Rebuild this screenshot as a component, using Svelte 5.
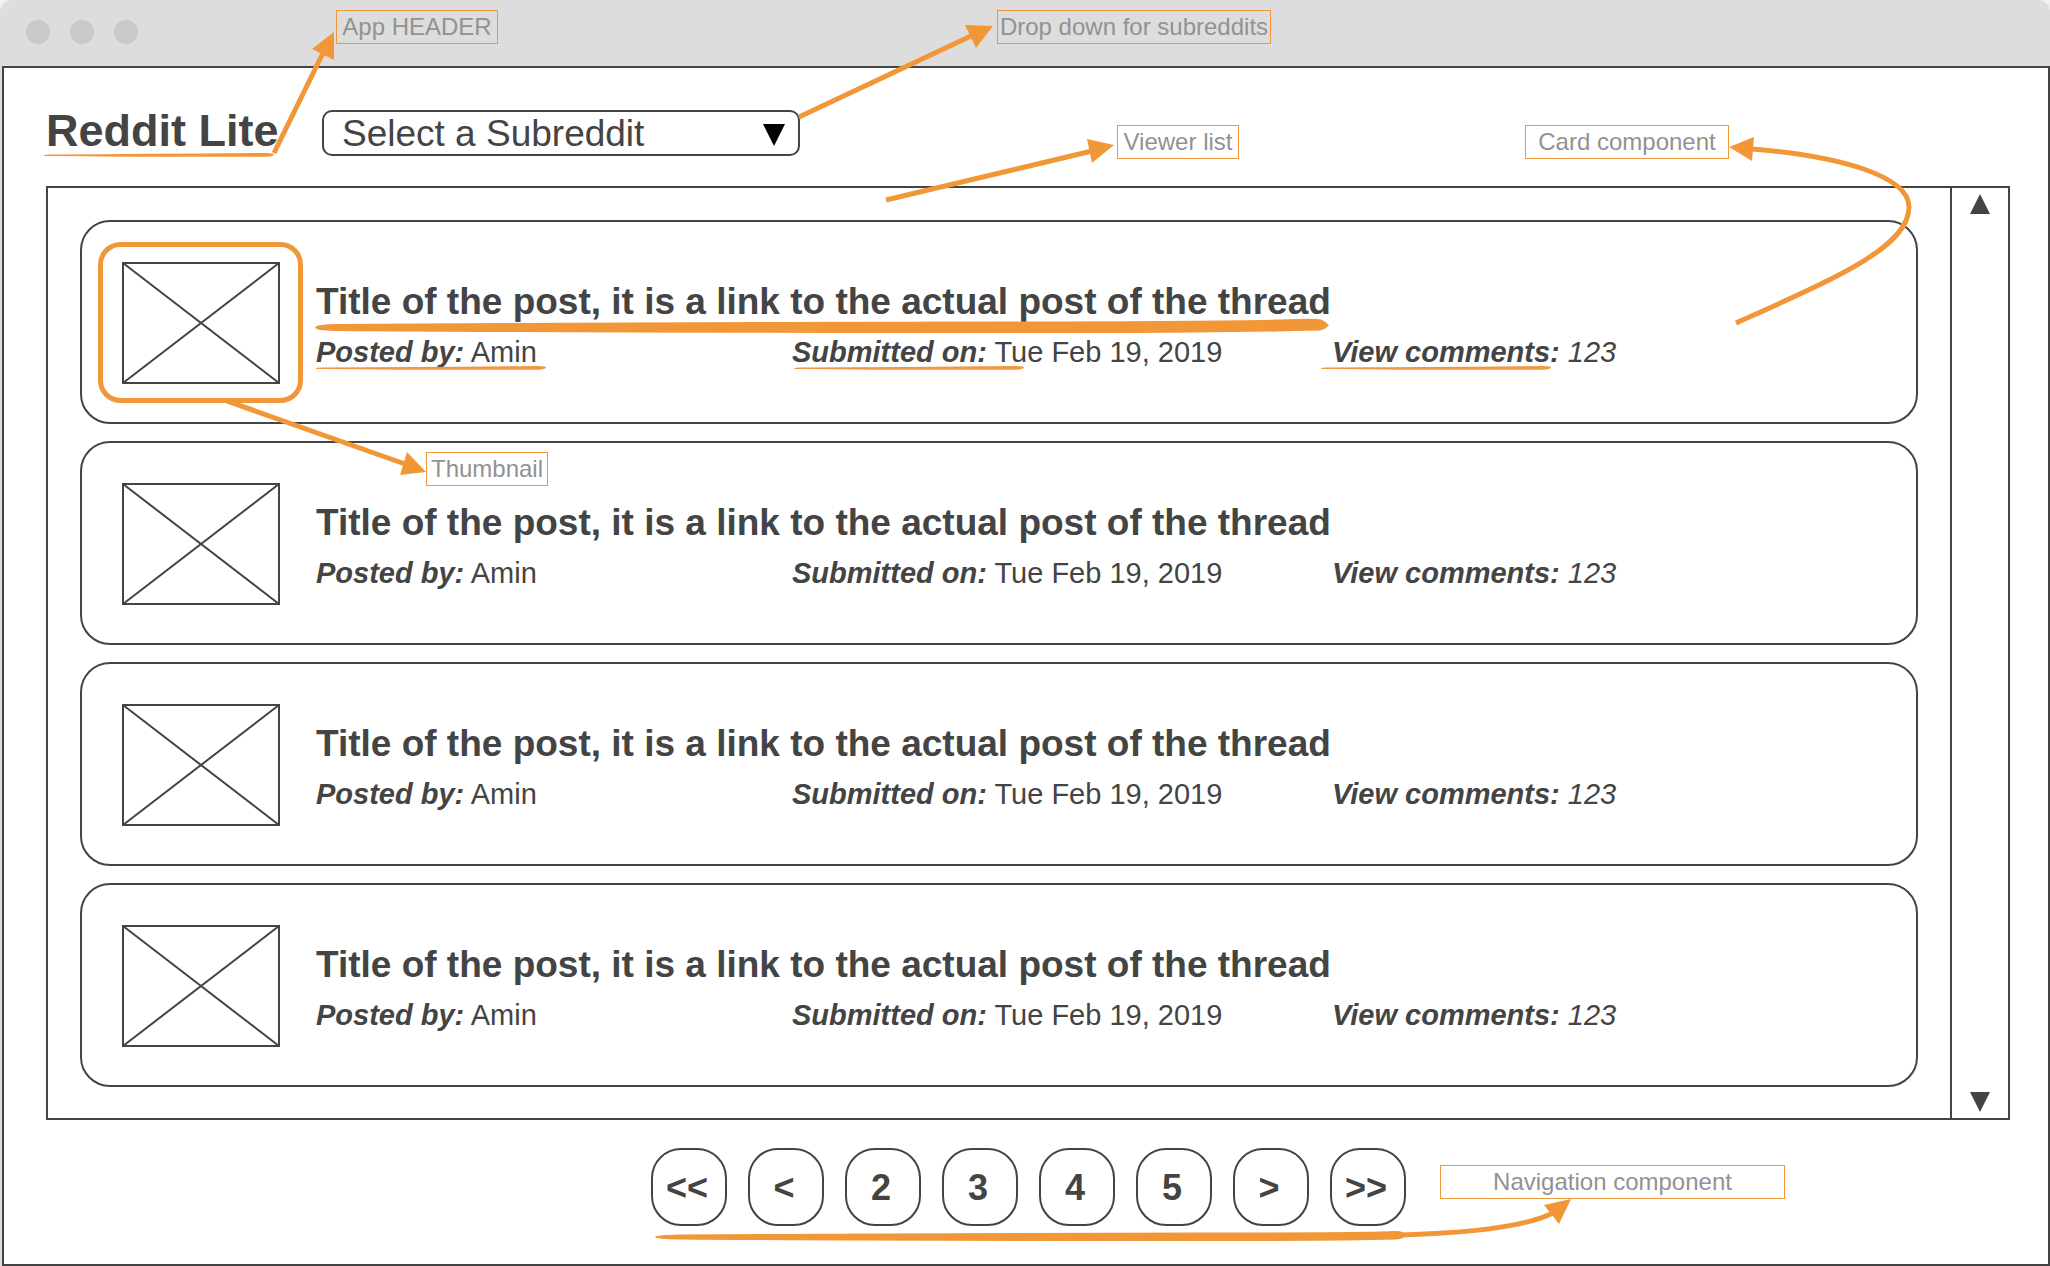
<script>
  const posts = [1, 2, 3, 4].map((id) => ({
    id,
    title: 'Title of the post, it is a link to the actual post of the thread',
    author: 'Amin',
    date: 'Tue Feb 19, 2019',
    comments: 123
  }));

  const pages = ['<<', '<', '2', '3', '4', '5', '>', '>>'];
</script>

<div class="window">
  <div class="titlebar">
    <span class="dot"></span>
    <span class="dot"></span>
    <span class="dot"></span>
  </div>

  <div class="frame">
    <header class="header">
      <h1>Reddit Lite</h1>
      <div class="picker">
        <select aria-label="Subreddit">
          <option>Select a Subreddit</option>
        </select>
        <svg class="caret" viewBox="0 0 22 22" aria-hidden="true"><path d="M0 0H22L11 22Z" /></svg>
      </div>
    </header>

    <main class="viewer">
      <div class="cards">
        {#each posts as post (post.id)}
          <article class="card">
            <svg class="thumb" viewBox="0 0 158 122" aria-hidden="true">
              <rect x="1" y="1" width="156" height="120" />
              <path d="M1 1L157 121M157 1L1 121" />
            </svg>
            <div class="body">
              <h2><a href="#post-{post.id}">{post.title}</a></h2>
              <div class="meta">
                <span><b>Posted by:</b> {post.author}</span>
                <span><b>Submitted on:</b> {post.date}</span>
                <span class="comments"><b>View comments:</b> {post.comments}</span>
              </div>
            </div>
          </article>
        {/each}
      </div>
      <div class="scrollbar">
        <button aria-label="Scroll up"><svg viewBox="0 0 20 20"><path d="M10 0L20 20H0Z" /></svg></button>
        <button aria-label="Scroll down"><svg viewBox="0 0 20 20"><path d="M0 0H20L10 20Z" /></svg></button>
      </div>
    </main>

    <nav class="pager" aria-label="Pages">
      {#each pages as page}
        <button>{page}</button>
      {/each}
    </nav>
  </div>

  <!-- Annotations drawn over the wireframe -->
  <svg class="marks" width="2050" height="1266" viewBox="0 0 2050 1266" aria-hidden="true">
    <defs>
      <path id="stroke" d="M0 2.4Q0 1.6 6 1.5Q110 1 222 0Q230 0 230 1.5Q229 3.6 222 3.7Q110 4.2 6 3Q0 3 0 2.4Z" />
    </defs>
    <g class="fill">
      <use href="#stroke" x="44" y="153" />
      <use href="#stroke" x="316" y="366" />
      <use href="#stroke" x="794" y="366" />
      <use href="#stroke" x="1321" y="366" />
      <path d="M315 327.500Q316 324.500 335 324Q600 322 1000 321.500Q1220 321 1280 319.500Q1315 318 1321 319.500Q1325 321 1329 325.500Q1325 329.500 1320 330.500Q1230 333 1100 333Q600 333 335 331Q316 330.500 315 327.500Z" />
      <path d="M655 1237Q656 1235 680 1234.500Q900 1233 1200 1232.500Q1360 1232.500 1394 1231Q1404 1230.500 1405 1235Q1404 1239 1396 1239.500Q1340 1241 1200 1241Q850 1241 680 1239.500Q656 1239 655 1237Z" />
      <path d="M334 32L312 49L334 60Z" />
      <path d="M993 26L965 25L976 48Z" />
      <path d="M1114 145L1087 139L1092 163Z" />
      <path d="M1729 147L1754 137L1752 161Z" />
      <path d="M426 472L407 452L400 475Z" />
      <path d="M1571 1199L1544 1205L1559 1224Z" />
    </g>
    <g class="line">
      <path d="M274 153L323 53" />
      <path d="M799 117L971 36" />
      <path d="M886 200L1092 151" />
      <path d="M1752 149C1840 156 1909 176 1909 207C1909 247 1836 278 1736 323" />
      <path d="M227 401L405 464" />
      <path d="M1400 1235C1470 1233 1525 1227 1553 1213" />
      <rect x="100.500" y="244.500" width="200" height="156" rx="20" />
    </g>
  </svg>
  <span class="note n-header">App HEADER</span>
  <span class="note n-dropdown">Drop down for subreddits</span>
  <span class="note n-viewer">Viewer list</span>
  <span class="note n-card">Card component</span>
  <span class="note n-thumb">Thumbnail</span>
  <span class="note n-nav">Navigation component</span>
</div>

<style>
  :global(body) {
    margin: 0;
    background: #f2f2f2;
  }

  .window {
    position: relative;
    box-sizing: border-box;
    min-height: 100vh;
    padding-left: 2px;
    display: flex;
    flex-direction: column;
    background: #ddd;
    border-radius: 12px 12px 0 0;
    overflow: hidden;
    color: #444;
    font-family: 'Liberation Sans', Arial, sans-serif;
  }

  .titlebar {
    display: flex;
    align-items: center;
    gap: 20px;
    height: 64px;
    padding: 0 24px 2px;
  }

  .dot {
    width: 24px;
    height: 24px;
    border-radius: 50%;
    background: #c9c9c9;
  }

  .frame {
    flex: 1;
    border: 2px solid #444;
    padding: 42px 38px 38px 42px;
    background: #fff;
  }

  .header {
    display: flex;
    align-items: flex-start;
    gap: 46px;
    margin-bottom: 30px;
  }

  h1 {
    margin: 0;
    width: 230px;
    font-size: 45px;
    line-height: 42px;
    white-space: nowrap;
  }

  .picker {
    position: relative;
    width: 478px;
    height: 46px;
  }

  select {
    appearance: none;
    display: block;
    box-sizing: border-box;
    width: 100%;
    height: 46px;
    margin: 0;
    padding: 2px 40px 0 18px;
    border: 2px solid #444;
    border-radius: 10px;
    background: #fff;
    color: #444;
    font: 37px/40px 'Liberation Sans', Arial, sans-serif;
  }

  .caret {
    position: absolute;
    right: 15px;
    top: 14px;
    width: 22px;
    height: 22px;
    fill: #000;
    pointer-events: none;
  }

  .viewer {
    display: flex;
    border: 2px solid #444;
  }

  .cards {
    flex: 1;
    display: flex;
    flex-direction: column;
    gap: 17px;
    padding: 32px 32px 31px;
  }

  .card {
    display: flex;
    align-items: center;
    gap: 36px;
    padding: 40px 0 38px 40px;
    border: 2px solid #444;
    border-radius: 30px;
  }

  .thumb {
    flex: none;
    width: 158px;
    height: 122px;
    fill: none;
    stroke: #444;
    stroke-width: 2;
  }

  .body {
    flex: 1;
    display: flex;
    flex-direction: column;
    gap: 8px;
    padding-top: 2px;
  }

  h2 {
    margin: 0;
    font-size: 37px;
    line-height: 48px;
  }

  h2 a {
    color: inherit;
    text-decoration: none;
  }

  .meta {
    display: grid;
    grid-template-columns: 119fr 135fr 146fr;
    font-size: 29px;
    line-height: 36px;
  }

  .meta b,
  .comments {
    font-style: italic;
  }

  .scrollbar {
    display: flex;
    flex-direction: column;
    justify-content: space-between;
    align-items: center;
    width: 56px;
    padding: 6px 0;
    border-left: 2px solid #444;
  }

  .scrollbar button {
    display: block;
    padding: 0;
    border: 0;
    background: none;
  }

  .scrollbar svg {
    display: block;
    width: 20px;
    height: 20px;
    fill: #444;
  }

  .pager {
    display: flex;
    justify-content: center;
    gap: 21px;
    margin-top: 28px;
    padding-left: 1px;
  }

  .pager button {
    box-sizing: border-box;
    width: 76px;
    height: 78px;
    padding: 2px 4px 0 0;
    border: 2px solid #444;
    border-radius: 30px;
    background: #fff;
    color: #444;
    font: bold 36px/40px 'Liberation Sans', Arial, sans-serif;
  }

  .marks {
    position: absolute;
    left: 0;
    top: 0;
    pointer-events: none;
  }

  .fill {
    fill: #f29737;
  }

  .line {
    fill: none;
    stroke: #f29737;
    stroke-width: 5;
  }

  .note {
    position: absolute;
    box-sizing: border-box;
    height: 34px;
    border: 1px solid #f29737;
    color: #929292;
    font-size: 24px;
    line-height: 32px;
    text-align: center;
    white-space: nowrap;
  }

  .n-header {
    left: 336px;
    top: 10px;
    width: 162px;
  }

  .n-dropdown {
    left: 997px;
    top: 10px;
    width: 274px;
  }

  .n-viewer {
    left: 1117px;
    top: 125px;
    width: 122px;
  }

  .n-card {
    left: 1525px;
    top: 125px;
    width: 204px;
  }

  .n-thumb {
    left: 426px;
    top: 452px;
    width: 122px;
  }

  .n-nav {
    left: 1440px;
    top: 1165px;
    width: 345px;
  }
</style>
